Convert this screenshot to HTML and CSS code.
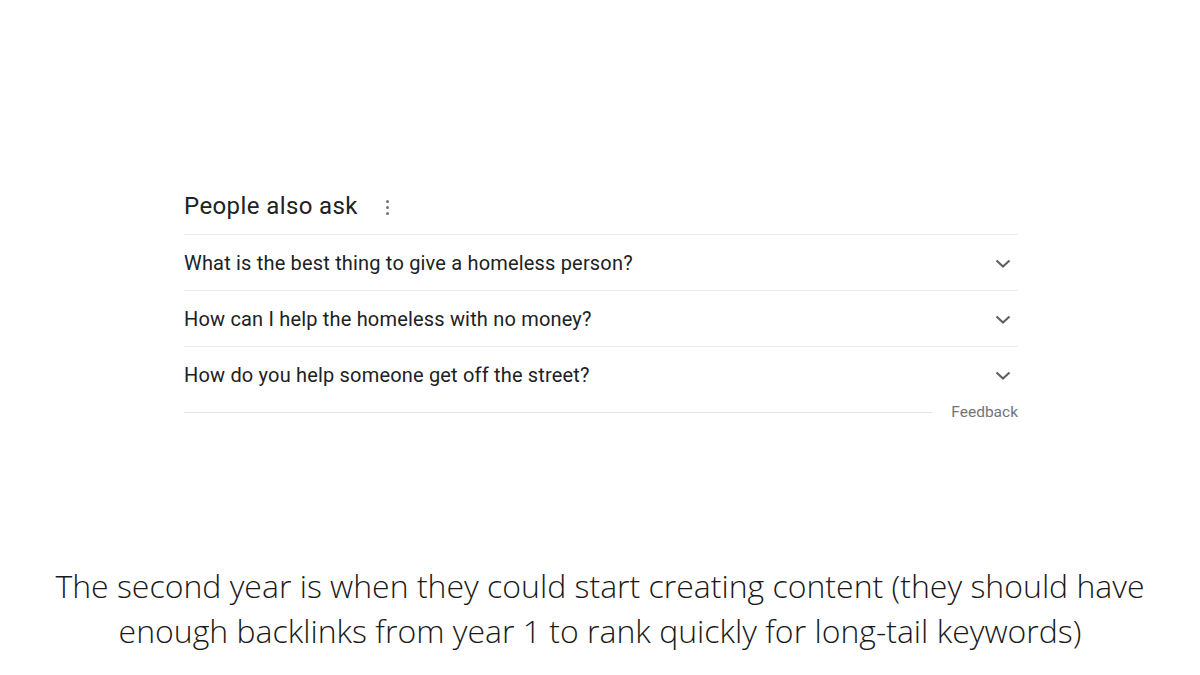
FILE: index.html
```html
<!DOCTYPE html>
<html>
<head>
<meta charset="utf-8">
<link rel="stylesheet" href="styles.css">
</head>
<body>
<main class="page">
  <section class="paa">
    <div class="paa-head">
      <h2 class="paa-title">People also ask</h2>
      <span class="more" aria-hidden="true"><i></i><i></i><i></i></span>
    </div>
    <div class="paa-list">
      <div class="q">
        <span class="q-text">What is the best thing to give a homeless person?</span>
        <svg class="chev" viewBox="0 0 24 24" width="24" height="24"><path d="M5.5 9.5 12 15.5l6.5-6" fill="none" stroke="#5f6368" stroke-width="2.2"/></svg>
      </div>
      <div class="q">
        <span class="q-text">How can I help the homeless with no money?</span>
        <svg class="chev" viewBox="0 0 24 24" width="24" height="24"><path d="M5.5 9.5 12 15.5l6.5-6" fill="none" stroke="#5f6368" stroke-width="2.2"/></svg>
      </div>
      <div class="q q-last">
        <span class="q-text">How do you help someone get off the street?</span>
        <svg class="chev" viewBox="0 0 24 24" width="24" height="24"><path d="M5.5 9.5 12 15.5l6.5-6" fill="none" stroke="#5f6368" stroke-width="2.2"/></svg>
      </div>
    </div>
    <div class="feedback-row">
      <span class="rule"></span>
      <span class="feedback">Feedback</span>
    </div>
  </section>
  <p class="caption">The second year is when they could start creating content (they should have enough backlinks from year 1 to rank quickly for long-tail keywords)</p>
</main>
</body>
</html>
```

FILE: styles.css
```css
html, body {
  margin: 0;
  padding: 0;
  background: #ffffff;
}
.page {
  width: 1200px;
  height: 675px;
  overflow: hidden;
  display: flex;
  flex-direction: column;
  align-items: center;
}
.paa {
  width: 834px;
  margin-top: 188px;
  margin-left: 2px;
  font-family: Roboto, "Liberation Sans", Arial, sans-serif;
}
.paa-head {
  display: flex;
  align-items: center;
  height: 46px;
  gap: 28px;
  padding-bottom: 10px;
  box-sizing: border-box;
}
.paa-title {
  margin: 0;
  font-weight: 400;
  font-size: 24px;
  line-height: 34px;
  color: #202124;
  letter-spacing: 0.4px;
}
.more {
  display: flex;
  flex-direction: column;
  gap: 3px;
  padding-top: 2px;
}
.more i {
  display: block;
  width: 3px;
  height: 3px;
  border-radius: 50%;
  background: #70757a;
}
.paa-list {
  border-top: 1px solid #ebebeb;
}
.q {
  height: 55px;
  display: flex;
  align-items: center;
  justify-content: space-between;
  border-bottom: 1px solid #ebebeb;
}
.q-last {
  border-bottom: none;
  height: 56px;
}
.q-text {
  font-size: 20px;
  letter-spacing: 0.18px;
  color: #202124;
}
.chev {
  margin-right: 3px;
}
.feedback-row {
  display: flex;
  align-items: center;
  height: 18px;
  gap: 19px;
}
.rule {
  flex: 1;
  height: 1px;
  background: #e3e3e3;
}
.feedback {
  font-size: 15.5px;
  color: #70757a;
}
.caption {
  margin: 142px 0 0;
  width: 1120px;
  text-align: center;
  font-family: "Open Sans", sans-serif;
  font-weight: 300;
  font-size: 32px;
  line-height: 45px;
  color: #1a1a1a;
}
```
